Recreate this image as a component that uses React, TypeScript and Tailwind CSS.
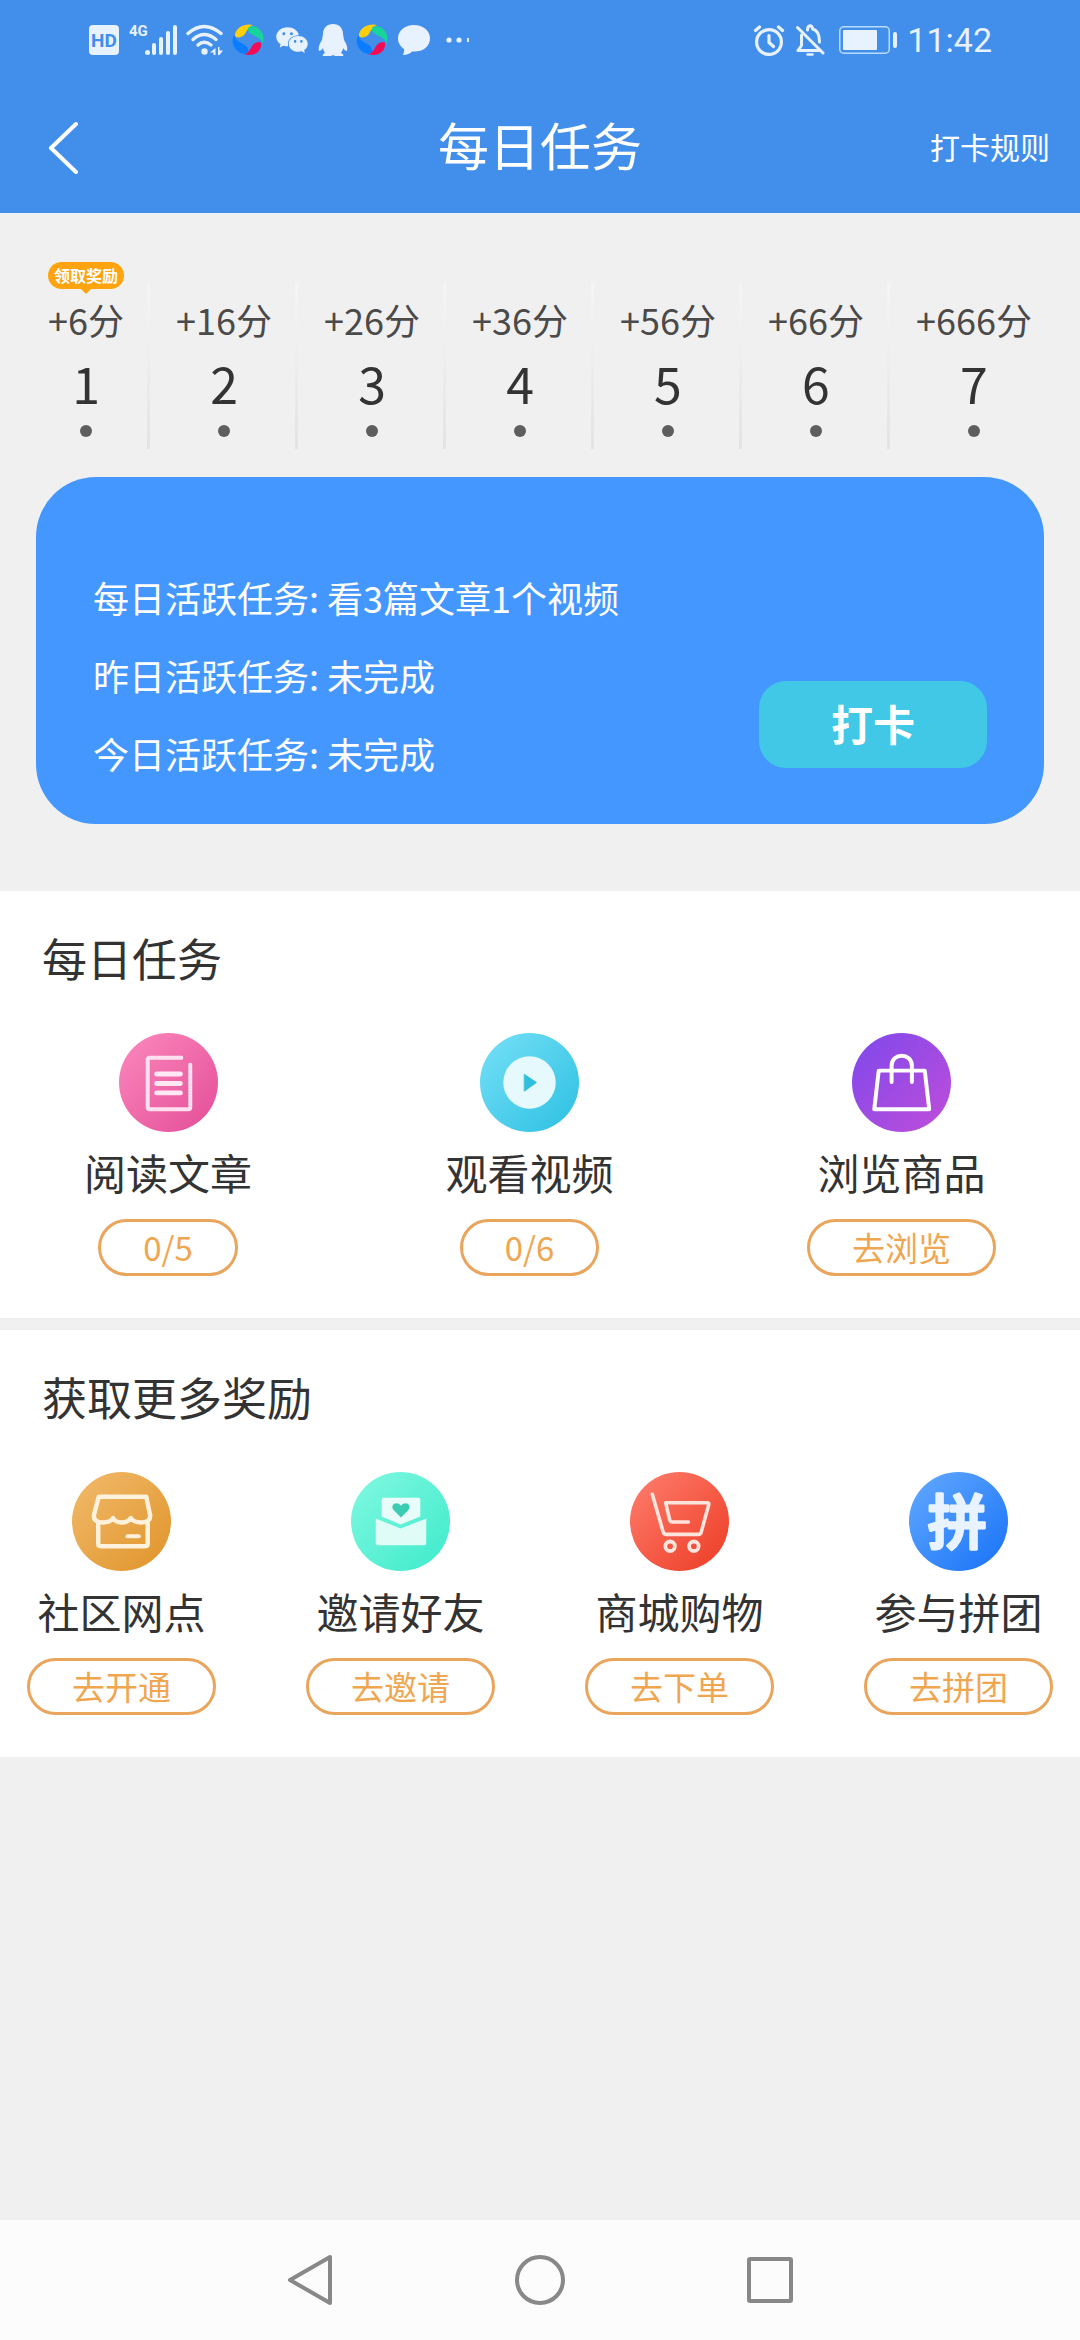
import React from "react"
import { AiFillWechat } from "react-icons/ai"

type Day = {
  day: number
  points: number
  claimable?: boolean
}

type Task = {
  label: string
  action: string
  icon: React.ReactNode
}

const DAYS: Day[] = [
  { day: 1, points: 6, claimable: true },
  { day: 2, points: 16 },
  { day: 3, points: 26 },
  { day: 4, points: 36 },
  { day: 5, points: 56 },
  { day: 6, points: 66 },
  { day: 7, points: 666 },
]

const STATUS_LINES = [
  "每日活跃任务: 看3篇文章1个视频",
  "昨日活跃任务: 未完成",
  "今日活跃任务: 未完成",
]

/* ---------- Status bar ---------- */

function SignalIcon() {
  return (
    <svg viewBox="0 0 34 32" className="h-8 w-[34px]" fill="#e8f2ff">
      <rect x="1" y="26" width="5" height="5" rx="2.5" />
      <rect x="8" y="19" width="4" height="12" rx="2" />
      <rect x="15" y="13" width="4" height="18" rx="2" />
      <rect x="22" y="7" width="4" height="24" rx="2" />
      <rect x="29" y="1" width="4" height="30" rx="2" />
    </svg>
  )
}

function WifiIcon() {
  return (
    <svg viewBox="0 0 38 32" className="h-8 w-[38px]" fill="none" stroke="#e8f2ff" strokeWidth="3.4" strokeLinecap="round">
      <path d="M2 9.500Q18 -4.500 35 9.500" />
      <path d="M7 15.500Q18 5.500 30 15.500" />
      <path d="M12 21Q18 15.500 25 21" />
      <circle cx="18.500" cy="27.500" r="3.200" fill="#e8f2ff" stroke="none" />
      <path d="M24 28.500L29.500 24V31H27.500V28.500ZM32 23V31H33.500L37 26.500H33.500V23Z" fill="#e8f2ff" stroke="none" />
    </svg>
  )
}

function SwirlIcon() {
  return (
    <svg viewBox="0 0 34 34" className="h-[34px] w-[34px]">
      <path d="M3 11C5 4 13 0 21 2C16 4 15 8 13 11C10 15 2 16 3 11Z" fill="#ffcf0a" />
      <path d="M20 3C29 4 33 12 31 21C30 17 27 15 23 13C15 10 13 4 20 3Z" fill="#17d49a" />
      <path d="M29 22C29 29 21 34 12 31C17 30 18 26 20 23C23 19 30 17 29 22Z" fill="#f50a56" />
      <path d="M12 31C3 29 -2 20 2 12C3 16 6 18 9 20C17 23 19 30 12 31Z" fill="#0a7cff" />
    </svg>
  )
}

function PenguinIcon() {
  return (
    <svg viewBox="0 0 30 34" className="h-[34px] w-[30px]" fill="#e8f2ff">
      <path d="M15 1C9 1 5 5 5 11L4 17C2 20 0 24 1 28C2 28 4 27 5 25C5 27 6 28 7 30C5 31 4 32 5 33H13L15 32L17 33H25C26 32 25 31 23 30C24 28 25 27 25 25C26 27 28 28 29 28C30 24 28 20 26 17L25 11C25 5 21 1 15 1Z" />
    </svg>
  )
}

function BubbleIcon() {
  return (
    <svg viewBox="0 0 32 32" className="h-8 w-8" fill="#e8f2ff">
      <path d="M16 1C7 1 0 6.500 0 14.500C0 19 2.500 22.500 6 25C6.500 27 5.500 29 5 31C9 31 12 29.500 14 27.500C24 28.500 32 23 32 14.500C32 6.500 25 1 16 1Z" />
    </svg>
  )
}

function AlarmIcon() {
  return (
    <svg viewBox="0 0 32 32" className="h-8 w-8" fill="none" stroke="#e8f2ff" strokeWidth="3.200" strokeLinecap="round" strokeLinejoin="round">
      <circle cx="16" cy="18" r="12.400" />
      <path d="M16 11.500V18.500L20.500 22.500M2.500 6.500L6.500 3M29.500 6.500L25.500 3" />
    </svg>
  )
}

function BellOffIcon() {
  return (
    <svg viewBox="0 0 30 32" className="h-8 w-[30px]" fill="none" stroke="#e8f2ff" strokeWidth="3" strokeLinecap="round" strokeLinejoin="round">
      <path d="M2.500 3.500L28 29M12.500 6C12.500 0.500 17.500 0.500 17.500 5C22.500 6 24.500 10 24.500 18M6.500 11V21.500L3 26.500H24" />
      <path d="M12.500 30.500H17.500" strokeWidth="2.500" />
    </svg>
  )
}

function StatusBar() {
  return (
    <div className="flex h-20 items-center justify-between pr-[88px] pl-[89px] text-[#e8f2ff]">
      <div className="flex items-center">
        <span className="mr-[10px] flex h-[30px] w-[30px] items-center justify-center rounded-[4px] bg-[#e8f2ff] font-[Roboto,sans-serif] text-[19px] leading-none font-bold text-[#428eeb]">
          HD
        </span>
        <span className="-mr-1 self-start font-[Roboto,sans-serif] text-[15px] leading-[18px] font-bold">4G</span>
        <span className="mr-2">
          <SignalIcon />
        </span>
        <span className="mr-2">
          <WifiIcon />
        </span>
        <span className="mr-2">
          <SwirlIcon />
        </span>
        <AiFillWechat className="mr-2 h-9 w-9" />
        <span className="mr-2">
          <PenguinIcon />
        </span>
        <span className="mr-2">
          <SwirlIcon />
        </span>
        <span className="mr-4">
          <BubbleIcon />
        </span>
        <svg viewBox="0 0 24 6" className="h-[6px] w-6" fill="#e8f2ff">
          <circle cx="3" cy="3" r="2.600" />
          <circle cx="13" cy="3" r="2.600" />
          <rect x="21" y="1" width="2" height="4" />
        </svg>
      </div>
      <div className="flex items-center">
        <span className="mr-[10px]">
          <AlarmIcon />
        </span>
        <span className="mr-[14px]">
          <BellOffIcon />
        </span>
        <svg viewBox="0 0 58 28" className="mr-[10px] h-7 w-[58px]" fill="#e8f2ff">
          <rect x="0.750" y="0.750" width="49.500" height="26.500" rx="4" fill="none" stroke="#b9dcff" strokeWidth="1.500" />
          <rect x="4" y="4" width="34" height="20" rx="1" />
          <rect x="54" y="6" width="4" height="16" rx="2" />
        </svg>
        <time className="font-[Roboto,sans-serif] text-[34px] leading-none">11:42</time>
      </div>
    </div>
  )
}

/* ---------- Task icons ---------- */

type DiscProps = {
  id: string
  from: string
  to: string
  children: React.ReactNode
}

// Round gradient disc shared by all of the task icons
function Disc({ id, from, to, children }: DiscProps) {
  return (
    <svg viewBox="0 0 100 100" className="h-[99px] w-[99px]" fill="none" strokeLinecap="round" strokeLinejoin="round" aria-hidden="true">
      <defs>
        <linearGradient id={id} x1="0.100" y1="0.100" x2="0.900" y2="0.900">
          <stop offset="0" stopColor={from} />
          <stop offset="1" stopColor={to} />
        </linearGradient>
      </defs>
      <circle cx="50" cy="50" r="50" fill={`url(#${id})`} />
      {children}
    </svg>
  )
}

const ArticleIcon = () => (
  <Disc id="article" from="#f983b9" to="#e6539b">
    <path d="M63 25H31Q29 25 29 27V75Q29 77 31 77H70Q72 77 72 75V32" stroke="#ffe0f0" strokeWidth="4" />
    <path d="M38 41.500H62M38 51H62M38 60.500H62" stroke="#ffe8f4" strokeWidth="5" />
  </Disc>
)

const VideoIcon = () => (
  <Disc id="video" from="#70ddf5" to="#33c3e4">
    <circle cx="50" cy="50" r="26.500" fill="#e6f9fd" />
    <path d="M45 42L57 50L45 58.500Z" fill="#2fbfdc" stroke="#2fbfdc" strokeWidth="1" />
  </Disc>
)

const BagIcon = () => (
  <Disc id="bag" from="#8549ea" to="#b94ddb">
    <path d="M27 38H73.500L78 77H22.500ZM40 49.500V33C40 19.500 60.500 19.500 60.500 33V49.500" stroke="#fff" strokeWidth="4" />
  </Disc>
)

const ShopIcon = () => (
  <Disc id="shop" from="#f0b766" to="#e1972f">
    <path
      d="M27 25H75L79 44Q79 51 70 51Q62 51 59.500 46.500Q56 51 50 51Q44 51 41.500 46.500Q39 51 31 51Q22 51 22 44ZM26.500 51V72Q26.500 75 29 75H74Q76.500 75 76.500 72V51"
      stroke="#fff1dc"
      strokeWidth="4.500"
    />
    <path d="M56 65H67.500" stroke="#fff1dc" strokeWidth="4" />
  </Disc>
)

const InviteIcon = () => (
  <Disc id="invite" from="#7bf7df" to="#44eccd">
    <path d="M33 26H68Q70 26 70 28V45L50 53L31 45V28Q31 26 33 26Z" fill="#e8fdf9" />
    <path d="M25 47L50 57L76 47V72Q76 74 74 74H27Q25 74 25 72Z" fill="#e0fcf7" />
    <path d="M50.500 46L43 38.500C39 33 46 28.500 50.500 34C55 28.500 62 33 58 38.500Z" fill="#3bcdb2" />
  </Disc>
)

const CartIcon = () => (
  <Disc id="cart" from="#fd7867" to="#ee422b">
    <path d="M22.500 22.500L33.500 60.500Q34 63 37 63H69Q71.500 63 72 60.500L79.500 33Q80 31 78 31H36L40 48Q40.500 50.500 43 50.500H59" stroke="#ffe3dd" strokeWidth="3.600" />
    <circle cx="40.500" cy="75" r="4.800" stroke="#ffe3dd" strokeWidth="3.800" />
    <circle cx="64.500" cy="75" r="4.800" stroke="#ffe3dd" strokeWidth="3.800" />
  </Disc>
)

const GroupIcon = () => (
  <Disc id="group" from="#5ca4ff" to="#1f77f8">
    <text
      x="49"
      y="73"
      textAnchor="middle"
      fontSize="60"
      fontWeight="500"
      fontFamily="'Noto Sans CJK SC', sans-serif"
      fill="#e9f3ff"
      stroke="#e9f3ff"
      strokeWidth="3"
    >
      拼
    </text>
  </Disc>
)

const DAILY_TASKS: Task[] = [
  { label: "阅读文章", action: "0/5", icon: <ArticleIcon /> },
  { label: "观看视频", action: "0/6", icon: <VideoIcon /> },
  { label: "浏览商品", action: "去浏览", icon: <BagIcon /> },
]

const REWARD_TASKS: Task[] = [
  { label: "社区网点", action: "去开通", icon: <ShopIcon /> },
  { label: "邀请好友", action: "去邀请", icon: <InviteIcon /> },
  { label: "商城购物", action: "去下单", icon: <CartIcon /> },
  { label: "参与拼团", action: "去拼团", icon: <GroupIcon /> },
]

/* ---------- Page parts ---------- */

function DayColumn({ day, points, claimable }: Day) {
  return (
    <li className="relative flex flex-col items-center px-[26px] pt-[6px] pb-3 text-center">
      {claimable && (
        <button className="absolute bottom-full left-1/2 mb-[-6px] h-[27px] w-[76px] -translate-x-1/2 rounded-full bg-[#ffa30f] text-[16px] leading-[25px] font-bold whitespace-nowrap text-white">
          领取奖励
          <span className="absolute top-full left-1/2 -translate-x-1/2 border-x-[5px] border-t-[5px] border-x-transparent border-t-[#ffa30f]" />
        </button>
      )}
      <span className="text-[36px] leading-[60px] text-[#4a4a4a]">+{points}分</span>
      <span className="text-[50px] leading-[66px] text-[#333]">{day}</span>
      <span className="mt-[10px] h-3 w-3 rounded-full bg-[#5e5e5e]" />
      {day < 7 && (
        <span className="absolute top-0 right-0 h-full w-[3px] bg-linear-to-b from-[#f5f5f5] via-[#ededed] to-[#e3e3e3]" />
      )}
    </li>
  )
}

function TaskItem({ label, action, icon }: Task) {
  return (
    <li className="flex flex-col items-center">
      {icon}
      <span className="mt-2 text-[42px] leading-[63px] text-[#333]">{label}</span>
      <button
        aria-label={`${label} ${action}`}
        className="mt-4 h-[57px] rounded-full border-3 border-[#e9a55b] px-[42px] text-[33px] leading-[51px] text-[#f0a650]"
      >
        {action}
      </button>
    </li>
  )
}

export default function App() {
  return (
    <div className="flex min-h-screen flex-col bg-[#f0f0f0] font-['Noto_Sans_CJK_SC',sans-serif]">
      <header className="bg-[#428eeb] text-white">
        <StatusBar />
        <div className="grid h-[133px] grid-cols-[1fr_auto_1fr] items-center px-[30px]">
          <button aria-label="返回" className="justify-self-start px-4">
            <svg viewBox="0 0 34 54" className="h-[54px] w-[34px]" fill="none" stroke="#fff" strokeWidth="4" strokeLinecap="round" strokeLinejoin="round">
              <path d="M30 4L5 28L30 52" />
            </svg>
          </button>
          <h1 className="pb-[6px] text-[51px] leading-[76px]">每日任务</h1>
          <a href="#rules" className="justify-self-end text-[30px] leading-[45px]">
            打卡规则
          </a>
        </div>
      </header>

      <main className="flex-1">
        <ul className="flex justify-center pt-[70px]">
          {DAYS.map((d) => (
            <DayColumn key={d.day} {...d} />
          ))}
        </ul>

        <section className="mx-9 mt-7 mb-[67px] flex items-end justify-between rounded-[60px] bg-[#4497ff] px-[57px] pt-[81px] pb-8 text-white">
          <div className="text-[36px] leading-[78px]">
            {STATUS_LINES.map((line) => (
              <p key={line}>{line}</p>
            ))}
          </div>
          <button className="mb-6 h-[87px] w-[228px] rounded-[27px] bg-[#40c8e6] pb-1 text-[42px] font-bold">
            打卡
          </button>
        </section>

        <section className="bg-white pt-[33px] pb-[42px]">
          <h2 className="px-[42px] text-[45px] leading-[68px] text-[#333]">每日任务</h2>
          <ul className="mt-[41px] flex justify-between px-[84px]">
            {DAILY_TASKS.map((t) => (
              <TaskItem key={t.label} {...t} />
            ))}
          </ul>
        </section>

        <section className="mt-3 bg-white pt-[33px] pb-[42px]">
          <h2 className="px-[42px] text-[45px] leading-[68px] text-[#333]">获取更多奖励</h2>
          <ul className="mt-[41px] flex justify-between px-[27px]">
            {REWARD_TASKS.map((t) => (
              <TaskItem key={t.label} {...t} />
            ))}
          </ul>
        </section>
      </main>

      {/* System navigation */}
      <nav className="flex h-[120px] items-center justify-center gap-[178px] bg-[#fcfcfc]">
        <button aria-label="后退">
          <svg viewBox="0 0 52 52" className="h-[52px] w-[52px]" fill="none" stroke="#888" strokeWidth="4" strokeLinejoin="round">
            <path d="M46 3V49L6 26Z" />
          </svg>
        </button>
        <button aria-label="主屏幕">
          <svg viewBox="0 0 52 52" className="h-[52px] w-[52px]" fill="none" stroke="#888" strokeWidth="4">
            <circle cx="26" cy="26" r="23" />
          </svg>
        </button>
        <button aria-label="最近任务">
          <svg viewBox="0 0 52 52" className="h-[52px] w-[52px]" fill="none" stroke="#888" strokeWidth="4" strokeLinejoin="round">
            <rect x="5" y="5" width="42" height="42" rx="1" />
          </svg>
        </button>
      </nav>
    </div>
  )
}
